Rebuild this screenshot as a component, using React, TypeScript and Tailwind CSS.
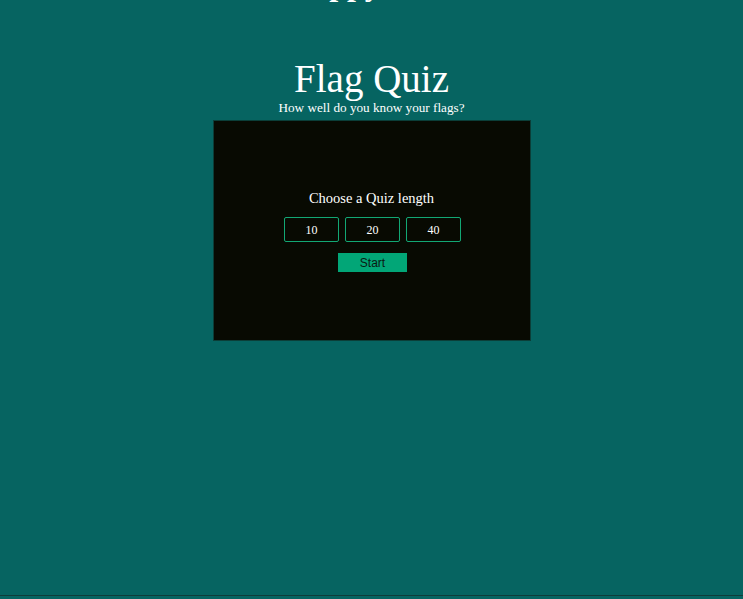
import { useState } from 'react';

const lengths = [10, 20, 40];

export default function App() {
  const [picked, setPicked] = useState<number | null>(null);

  return (
    <div className="h-[599px] flex flex-col bg-[#066461] text-white overflow-hidden" style={{ fontFamily: '"Liberation Serif", serif' }}>
      <header className="h-[4px] overflow-hidden flex justify-center">
        <h2 className="mt-[-32px] text-[32px] font-bold leading-none">Happy Quiz</h2>
      </header>

      <main className="flex flex-col items-center pt-[55px]">
        <h1 className="text-[39px] leading-[40px]">Flag Quiz</h1>
        <p className="text-[13.2px] leading-[16px] mt-[1px]">How well do you know your flags?</p>

        <section className="mt-[4px] w-[318px] h-[221px] bg-[#080a02] border border-[#0b3e38] flex flex-col items-center justify-center">
          <h3 className="text-[14.5px] leading-[18px]">Choose a Quiz length</h3>
          <div className="flex gap-[6px] mt-[10px] ml-[2px]">
            {lengths.map((n) => (
              <button
                key={n}
                onClick={() => setPicked(n)}
                className={`w-[55px] h-[25px] rounded-[2px] border border-[#12a874] text-[12px] text-white ${picked === n ? 'bg-[#11996b]/30' : 'bg-transparent'}`}
                style={{ fontFamily: '"Liberation Serif", serif' }}
              >
                {n}
              </button>
            ))}
          </div>
          <button
            className="mt-[11px] ml-[2px] w-[69px] h-[19px] bg-[#02a677] text-[#0a1a12] text-[12px] leading-none"
            style={{ fontFamily: '"Liberation Sans", Arial, sans-serif' }}
          >
            Start
          </button>
        </section>
      </main>

      <div className="flex-1" />
      <div className="h-[1px] bg-[#0f3d3a]" />
      <div className="h-[3px]" />
    </div>
  );
}
